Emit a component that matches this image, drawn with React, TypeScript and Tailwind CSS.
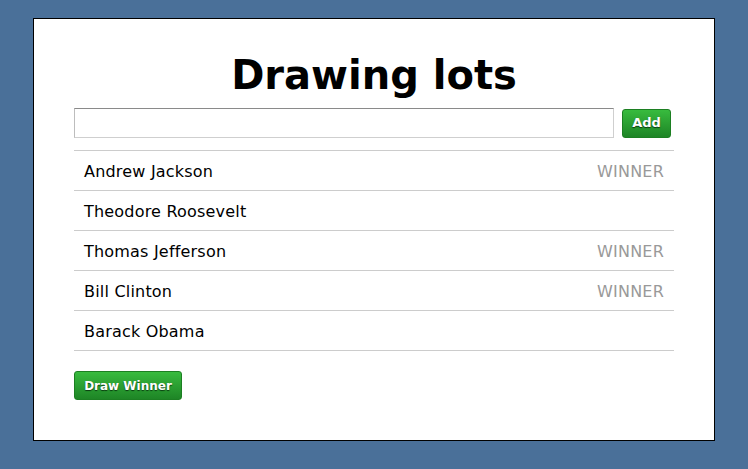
const people = [
  { name: "Andrew Jackson", winner: true },
  { name: "Theodore Roosevelt", winner: false },
  { name: "Thomas Jefferson", winner: true },
  { name: "Bill Clinton", winner: true },
  { name: "Barack Obama", winner: false },
];

function GreenButton({ children, className = "" }: { children: React.ReactNode; className?: string }) {
  return (
    <button
      className={
        "rounded-[3px] border border-[#1c7f22] bg-gradient-to-b from-[#38bb3e] to-[#1e8526] font-bold text-[12px] text-white [text-shadow:0_1px_1px_#0a3a10] " +
        className
      }
    >
      {children}
    </button>
  );
}

export default function App() {
  return (
    <div className="min-h-[469px] bg-[#4a7099] pt-[18px] pb-[28px] font-['DejaVu_Sans',Verdana,sans-serif]">
      <div className="mx-auto w-[682px] border border-black bg-white px-10 pt-[26px] pb-10">
        <h1 className="text-center text-[40px] font-bold leading-[60px] text-black">Drawing lots</h1>
        <div className="mt-[3px] flex items-center gap-2">
          <input
            type="text"
            className="h-[30px] flex-1 border border-[#cfcfcf] border-t-[#8a8a8a] border-l-[#bdbdbd] bg-white px-1 outline-none"
          />
          <GreenButton className="mr-[3px] h-[29px] w-[49px] text-[13px]">Add</GreenButton>
        </div>
        <ul className="mt-3 border-b border-[#cccccc]">
          {people.map((p) => (
            <li
              key={p.name}
              className="flex h-10 items-center justify-between border-t border-[#cccccc] px-[10px] pt-[2px] text-[16px] tracking-[0.2px] text-black"
            >
              <span>{p.name}</span>
              {p.winner && <span className="text-[#999999]">WINNER</span>}
            </li>
          ))}
        </ul>
        <GreenButton className="mt-5 h-[29px] w-[108px]">Draw Winner</GreenButton>
      </div>
    </div>
  );
}
